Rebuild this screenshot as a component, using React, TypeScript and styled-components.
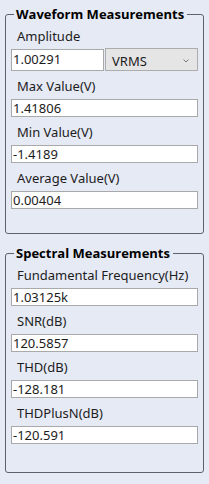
import React, { FC } from "react";
import styled, { createGlobalStyle } from "styled-components";

// Styles
const GlobalStyle = createGlobalStyle`
  html, body {
    margin: 0;
    padding: 0;
    background: #e6eaf5;
  }
  body {
    font-family: "Noto Sans", "Open Sans", sans-serif;
    color: #1c1c1c;
  }
`;

const Panel = styled.div`
  display: flex;
  flex-direction: column;
  gap: 10px;
  padding: 5px 6px 0 5px;
  width: 199px;
`;

const GroupBox = styled.fieldset`
  box-sizing: border-box;
  height: 229px;
  margin: 0;
  padding: 4px 5px 0 5px;
  border: 1px solid #59626e;
  border-radius: 3px;
  display: flex;
  flex-direction: column;
  gap: 6px;
  min-width: 0;
`;

const Legend = styled.legend`
  font-family: "Open Sans", "Noto Sans", sans-serif;
  font-weight: 700;
  font-size: 13px;
  line-height: 18px;
  color: #000;
  padding: 0 3px 0 2px;
  margin-left: 3px;
`;

const Row = styled.div`
  display: flex;
  flex-direction: column;
`;

const Label = styled.div`
  font-size: 13px;
  line-height: 18px;
  height: 18px;
  padding-left: 6px;
  margin-bottom: 4px;
  white-space: nowrap;
`;

const Input = styled.div<{ $tall?: boolean }>`
  box-sizing: border-box;
  height: ${(p) => (p.$tall ? "22px" : "18px")};
  flex: 1;
  background: #fff;
  border: 1px solid #a9a9a9;
  padding-left: 1px;
  font-size: 13px;
  line-height: ${(p) => (p.$tall ? "19px" : "16px")};
  white-space: nowrap;
  overflow: hidden;
`;

const InputPair = styled.div`
  display: flex;
  gap: 1px;
`;

const Select = styled.div`
  box-sizing: border-box;
  width: 93px;
  height: 23px;
  margin-top: -1px;
  background: #e5e5e5;
  border: 1px solid #adadad;
  display: flex;
  align-items: center;
  justify-content: space-between;
  padding: 2px 8px 0 6px;
  font-size: 13px;
`;

// Components
const Chevron: FC = () => (
  <svg width="6" height="4" viewBox="0 0 6 4">
    <polyline points="0.5,0.5 3,3 5.5,0.5" fill="none" stroke="#7a7a7a" strokeWidth="1" />
  </svg>
);

interface FieldProps {
  label: string;
  value: string;
}

const Field: FC<FieldProps> = ({ label, value }) => (
  <Row>
    <Label>{label}</Label>
    <Input>{value}</Input>
  </Row>
);

const App: FC = () => (
  <>
    <GlobalStyle />
    <Panel>
      <GroupBox>
        <Legend>Waveform Measurements</Legend>
        <Row>
          <Label>Amplitude</Label>
          <InputPair>
            <Input $tall>1.00291</Input>
            <Select>
              <span>VRMS</span>
              <Chevron />
            </Select>
          </InputPair>
        </Row>
        <Field label="Max Value(V)" value="1.41806" />
        <Field label="Min Value(V)" value="-1.4189" />
        <Field label="Average Value(V)" value="0.00404" />
      </GroupBox>
      <GroupBox>
        <Legend>Spectral Measurements</Legend>
        <Field label="Fundamental Frequency(Hz)" value="1.03125k" />
        <Field label="SNR(dB)" value="120.5857" />
        <Field label="THD(dB)" value="-128.181" />
        <Field label="THDPlusN(dB)" value="-120.591" />
      </GroupBox>
    </Panel>
  </>
);

export default App;
